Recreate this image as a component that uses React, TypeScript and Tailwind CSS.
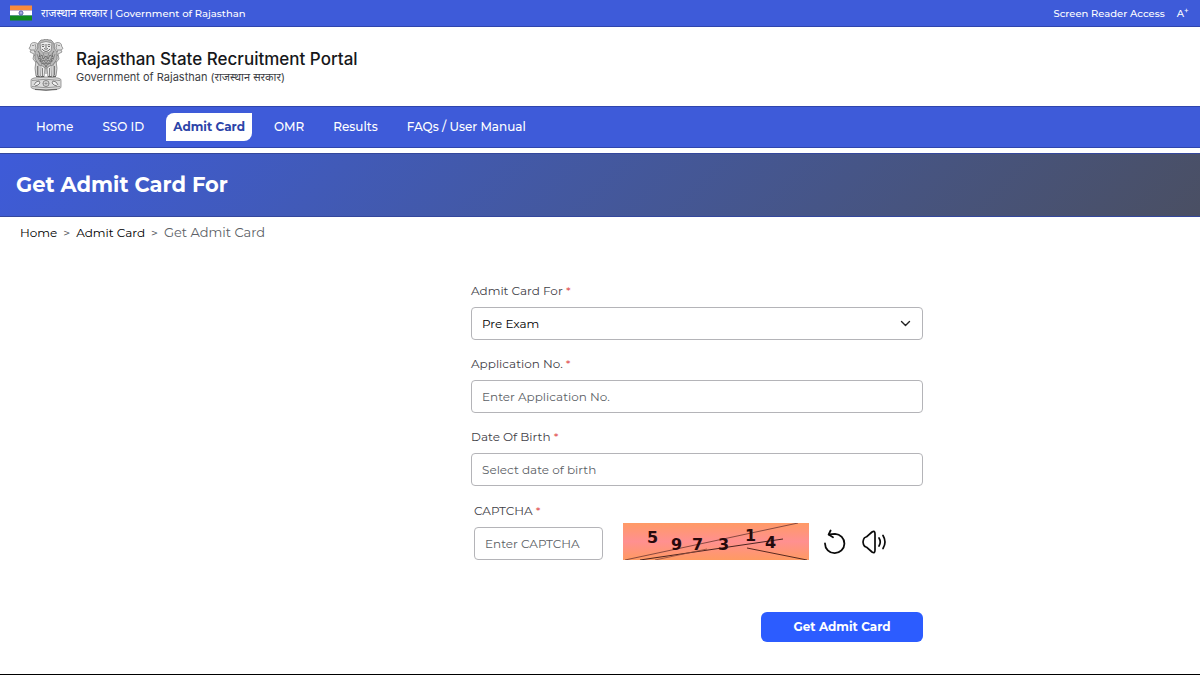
import React from 'react';

interface NavItem {
  label: string;
  active?: boolean;
}

const navItems: NavItem[] = [
  { label: 'Home' },
  { label: 'SSO ID' },
  { label: 'Admit Card', active: true },
  { label: 'OMR' },
  { label: 'Results' },
  { label: 'FAQs / User Manual' },
];

const captchaDigits = [
  { char: '5', x: 24, y: 20 },
  { char: '9', x: 48, y: 27 },
  { char: '7', x: 69, y: 27 },
  { char: '3', x: 95, y: 27 },
  { char: '1', x: 122, y: 18 },
  { char: '4', x: 142, y: 25 },
];

const inputClass =
  'block h-[33px] w-full rounded border border-[#b4b4b8] bg-white px-2.5 text-[12px] text-black placeholder:text-[#5c5f66]';

const Flag: React.FC = () => (
  <svg width="22" height="16" viewBox="0 0 22 16" aria-hidden="true">
    <rect width="22" height="5" y="0.5" fill="#f98b3c" />
    <rect width="22" height="5" y="5.5" fill="#fff" />
    <rect width="22" height="5" y="10.5" fill="#128a1c" />
    <circle cx="11" cy="8" r="2" fill="#c9cdf0" stroke="#2b3190" strokeWidth="0.8" />
    <circle cx="11" cy="8" r="0.6" fill="#2b3190" />
  </svg>
);

const Emblem: React.FC = () => (
  <svg width="36" height="52" viewBox="0 0 36 52" fill="none" stroke="#777" strokeWidth="0.7" aria-hidden="true">
    {/* side lions */}
    <path d="M10 5C6 2 2 4 2.500 7L1 9.500L3 11L2 13L6 15L5 20L10 26Z" fill="#dedede" />
    <path d="M26 5C30 2 34 4 33.500 7L35 9.500L33 11L34 13L30 15L31 20L26 26Z" fill="#dedede" />
    <path d="M4 6.500H6M3 11H6M7 5L8 9L6 12L9 15M6 16L9 18M32 6.500H30M33 11H30M29 5L28 9L30 12L27 15M30 16L27 18" />
    {/* front lion */}
    <path d="M11 3Q13 0 15 1Q18 -1 21 1Q23 0 25 3Q27 6 26 9L29 13L29 20L25 26L18 29L11 26L7 20L7 13L10 9Q9 6 11 3Z" fill="#b9b9b9" />
    <path d="M12 4Q18 1 24 4L23 12Q18 16 13 12Z" fill="#ededed" />
    <path d="M13.500 6Q15 5 16.500 6M19.500 6Q21 5 22.500 6M14 7.500H16M20 7.500H22M18 5V9M16 9.500Q18 11 20 9.500M14 10Q18 15 22 10" stroke="#333" />
    <path d="M10 12L12 15L11 18L14 16L15 20L18 17L20 20L22 16L25 18L24 15L26 12M10 19L13 20L12 23L16 21L18 25L20 21L24 23L23 20L26 19M13 25L16 24L18 28L20 24L23 25" stroke="#555" />
    <path d="M9 15L11 21L14 24M27 15L25 21L22 24M15 14L18 22L21 14M12 17L16 26M24 17L20 26" stroke="#777" />
    {/* legs */}
    <path d="M8 22Q6 29 8 37H11L11 26ZM28 22Q30 29 28 37H25L25 26Z" fill="#d4d4d4" />
    <path d="M13 26L12.500 38H16L17 29ZM23 26L23.500 38H20L19 29Z" fill="#ececec" />
    <path d="M9.500 27L9.500 36M26.500 27L26.500 36M14.500 29L14.500 37M21.500 29L21.500 37M18 29V35" stroke="#555" />
    <path d="M8 37.500H12M13 37.500H16M20 37.500H23.500M24.500 37.500H28" stroke="#333" />
    {/* abacus */}
    <path d="M6 39Q18 37 30 39Q34 40 33 42V47Q34 49 30 50Q18 52 6 50Q2 49 3 47V42Q2 40 6 39Z" fill="#dcdcdc" />
    <path d="M4 41.500Q18 39 32 41.500M4 47.500Q18 50 32 47.500" />
    <circle cx="18" cy="44.500" r="3" fill="#f5f5f5" stroke="#555" />
    <path d="M18 41.500V47.500M15 44.500H21M16 42.500L20 46.500M20 42.500L16 46.500" strokeWidth="0.5" />
    <path d="M6 46L8 43L11 42L12 44L10 46L7 47M30 46L28 43L25 42L24 44L26 46L29 47" fill="#f0f0f0" stroke="#555" />
    <path d="M7 50.500Q18 52 29 50.500" stroke="#333" />
  </svg>
);

const Chevron: React.FC = () => (
  <svg
    className="pointer-events-none absolute right-3 top-3"
    width="11"
    height="9"
    viewBox="0 0 11 9"
    fill="none"
    stroke="#222"
    strokeWidth="1.4"
    strokeLinecap="round"
    strokeLinejoin="round"
    aria-hidden="true"
  >
    <path d="M1.500 2.500L5.500 6.500L9.500 2.500" />
  </svg>
);

const CaptchaImage: React.FC = () => (
  <svg className="shrink-0" width="186" height="37" viewBox="0 0 186 37" role="img" aria-label="Captcha code">
    <defs>
      <linearGradient id="captchaBg" x1="0" y1="0" x2="0" y2="1">
        <stop offset="0" stopColor="#ff9a66" />
        <stop offset="0.5" stopColor="#ff9090" />
        <stop offset="1" stopColor="#ff9a62" />
      </linearGradient>
    </defs>
    <rect width="186" height="37" fill="url(#captchaBg)" />
    <path d="M2 37L175 0" stroke="#7c4038" strokeWidth="0.9" />
    <path d="M17 37L160 16" stroke="#4c2420" strokeWidth="1" />
    <path d="M32 37L84 26" stroke="#8a4a3c" strokeWidth="0.8" />
    <path d="M124 25L184 37" stroke="#5a2a20" strokeWidth="1" />
    {captchaDigits.map((digit) => (
      <text
        key={digit.char}
        x={digit.x}
        y={digit.y}
        fill="#260a0c"
        fontSize="16"
        fontWeight="700"
        fontFamily="'DejaVu Sans', sans-serif"
      >
        {digit.char}
      </text>
    ))}
  </svg>
);

const RefreshIcon: React.FC = () => (
  <svg width="24" height="28" viewBox="0 0 24 28" fill="none" stroke="#0a0a0a" strokeWidth="1.8" strokeLinecap="round" strokeLinejoin="round" aria-hidden="true">
    <path d="M2 15.500A9.700 9.700 0 1 0 12 5.800Q9 5.800 6 6.500" />
    <path d="M7.600 2.500L5.600 6.600L10 9.200" />
  </svg>
);

const SpeakerIcon: React.FC = () => (
  <svg width="26" height="28" viewBox="0 0 26 28" fill="none" stroke="#0a0a0a" strokeWidth="1.7" strokeLinecap="round" strokeLinejoin="round" aria-hidden="true">
    <path d="M2.500 11.500Q3 9.500 5.500 8.800L11 4Q14 2 14 6V22Q14 26 11 24L5.500 19.200Q3 18.500 2.500 16.500Q1.500 14 2.500 11.500Z" />
    <path d="M18 10Q20.500 14 18 18" />
    <path d="M22 7.500Q26 14 22 20.500" />
  </svg>
);

interface FieldProps {
  id: string;
  label: string;
  children: React.ReactNode;
}

const Field: React.FC<FieldProps> = ({ id, label, children }) => (
  <div>
    <label htmlFor={id} className="mb-2 block text-[12px] leading-4 text-[#3f4147]">
      {label} <span className="text-[#e04848]">*</span>
    </label>
    {children}
  </div>
);

const App: React.FC = () => {
  return (
    <div className="flex min-h-screen flex-col overflow-x-hidden border-b border-black bg-white font-['Montserrat','Inter','Noto_Sans',sans-serif]">
      <div className="flex h-[27px] items-center justify-between whitespace-nowrap border-b border-[#2f45ad] bg-[#3e5bd9] pl-2.5 text-[10px] font-medium text-white">
        <div className="flex items-center gap-[9px]">
          <Flag />
          <span>
            <span className="text-[11px] font-normal">राजस्थान सरकार</span> | Government of Rajasthan
          </span>
        </div>
        <div className="-mr-2 flex items-center gap-3">
          <a href="#access">Screen Reader Access</a>
          <button type="button" aria-label="Increase text size">
            A<sup className="text-[8px]">+</sup>
          </button>
          <button type="button" aria-label="Normal text size">A</button>
        </div>
      </div>

      <header className="flex h-[79px] items-center gap-3 px-7 pb-1 font-['Inter','Noto_Sans',sans-serif]">
        <Emblem />
        <div className="pt-1">
          <h1 className="text-[17px] font-medium leading-5 text-[#16171a]">Rajasthan State Recruitment Portal</h1>
          <p className="text-[11px] leading-4 text-[#3c3e43]">Government of Rajasthan (राजस्थान सरकार)</p>
        </div>
      </header>

      <nav className="flex h-[42px] items-center gap-[15px] border-y border-[#2f45ad] bg-[#3e5bd9] px-[29px] text-[12px] font-medium text-white">
        {navItems.map((item) => (
          <a
            key={item.label}
            href="#nav"
            className={
              item.active
                ? 'rounded-br-lg rounded-tl-lg bg-white px-[7px] py-1.5 font-bold leading-4 text-[#2c44a8]'
                : 'px-[7px] py-1.5 leading-4'
            }
          >
            {item.label}
          </a>
        ))}
      </nav>

      <div className="mt-[5px] flex h-16 items-center border-y border-[#34479c] bg-linear-135 from-[#3e5bd9] to-[#4a4f63] px-4">
        <h2 className="text-[21px] font-bold text-white">Get Admit Card For</h2>
      </div>

      <div className="flex h-8 items-center gap-1.5 px-5 text-[12px] text-black">
        <a href="#home">Home</a>
        <span className="text-[#4b4e55]">&gt;</span>
        <a href="#admit">Admit Card</a>
        <span className="text-[#4b4e55]">&gt;</span>
        <span className="text-[13px] text-[#5c5f66]">Get Admit Card</span>
      </div>

      <main className="grid grid-cols-[471fr_452fr_277fr] pt-[34px]">
        <form className="col-start-2 flex flex-col gap-4">
          <Field id="examType" label="Admit Card For">
            <div className="relative">
              <select id="examType" className={`${inputClass} appearance-none`}>
                <option>Pre Exam</option>
              </select>
              <Chevron />
            </div>
          </Field>
          <Field id="applicationNo" label="Application No.">
            <input id="applicationNo" type="text" placeholder="Enter Application No." className={inputClass} />
          </Field>
          <Field id="dob" label="Date Of Birth">
            <input id="dob" type="text" placeholder="Select date of birth" className={inputClass} />
          </Field>
          <div className="flex items-end pl-[3px] pt-px">
            <div className="w-[129px]">
              <Field id="captcha" label="CAPTCHA">
                <input id="captcha" type="text" placeholder="Enter CAPTCHA" className={inputClass} />
              </Field>
            </div>
            <div className="ml-5 flex items-center">
              <CaptchaImage />
              <button type="button" aria-label="Refresh captcha" className="ml-3.5">
                <RefreshIcon />
              </button>
              <button type="button" aria-label="Play captcha audio" className="ml-3.5">
                <SpeakerIcon />
              </button>
            </div>
          </div>
          <button
            type="button"
            className="mt-9 h-[30px] w-[162px] self-end rounded-md bg-[#2c5cff] text-[12px] font-bold text-white"
          >
            Get Admit Card
          </button>
        </form>
      </main>
    </div>
  );
};

export default App;
